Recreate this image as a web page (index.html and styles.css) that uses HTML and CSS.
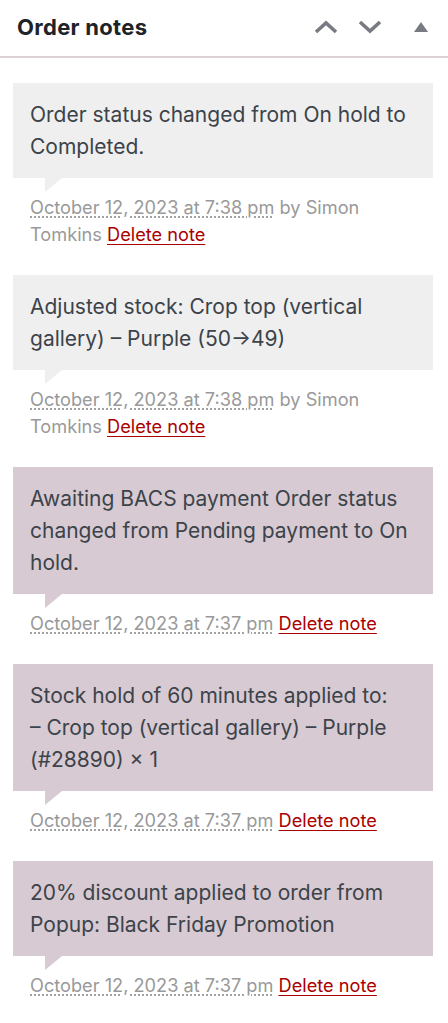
FILE: index.html
```html
<!DOCTYPE html>
<html lang="en">

<head>
    <meta charset="UTF-8">
    <meta name="viewport" content="width=device-width, initial-scale=1.0">
    <title>Order notes</title>
    <link rel="stylesheet" href="styles.css">
</head>
<body>
    <div class="postbox">
        <!-- Box header -->
        <div class="postbox-header">
            <h2>Order notes</h2>
            <div class="handle-actions">
                <button class="handle-order" title="Move up">
                    <svg width="24" height="14" viewBox="0 0 24 14"><polyline points="2,12 12,3 22,12" /></svg>
                </button>
                <button class="handle-order" title="Move down">
                    <svg width="24" height="14" viewBox="0 0 24 14"><polyline points="2,2 12,11 22,2" /></svg>
                </button>
                <button class="handle-toggle" title="Toggle panel">
                    <svg width="14" height="10" viewBox="0 0 14 10"><polygon points="7,0 14,10 0,10" /></svg>
                </button>
            </div>
        </div>

        <!-- Notes -->
        <ul class="order-notes">
            <li class="note">
                <div class="note-content">
                    <p>Order status changed from On hold to Completed.</p>
                </div>
                <p class="meta">
                    <abbr class="exact-date" title="2023-10-12 19:38:00">October 12, 2023 at 7:38 pm</abbr> by Simon Tomkins
                    <a href="#" class="delete-note">Delete note</a>
                </p>
            </li>
            <li class="note">
                <div class="note-content">
                    <p>Adjusted stock: Crop top (vertical gallery) – Purple (50→49)</p>
                </div>
                <p class="meta">
                    <abbr class="exact-date" title="2023-10-12 19:38:00">October 12, 2023 at 7:38 pm</abbr> by Simon Tomkins
                    <a href="#" class="delete-note">Delete note</a>
                </p>
            </li>
            <li class="note system-note">
                <div class="note-content">
                    <p>Awaiting BACS payment Order status changed from Pending payment to On hold.</p>
                </div>
                <p class="meta">
                    <abbr class="exact-date" title="2023-10-12 19:37:00">October 12, 2023 at 7:37 pm</abbr>
                    <a href="#" class="delete-note">Delete note</a>
                </p>
            </li>
            <li class="note system-note">
                <div class="note-content">
                    <p>Stock hold of 60 minutes applied to:<br>– Crop top (vertical gallery) – Purple (#28890) × 1</p>
                </div>
                <p class="meta">
                    <abbr class="exact-date" title="2023-10-12 19:37:00">October 12, 2023 at 7:37 pm</abbr>
                    <a href="#" class="delete-note">Delete note</a>
                </p>
            </li>
            <li class="note system-note">
                <div class="note-content">
                    <p>20% discount applied to order from Popup: Black Friday Promotion</p>
                </div>
                <p class="meta">
                    <abbr class="exact-date" title="2023-10-12 19:37:00">October 12, 2023 at 7:37 pm</abbr>
                    <a href="#" class="delete-note">Delete note</a>
                </p>
            </li>
        </ul>
    </div>
</body>

</html>
```

FILE: styles.css
```css
:root {
    --color-title: #1d2327;
    --color-text: #3c434a;
    --color-meta: #999999;
    --color-icon: #787c82;
    --color-note: #efefef;
    --color-system-note: #d7cad2;
    --color-delete: #a00;
    --color-divider: #dcd2d8;
}

* {
    margin: 0;
    padding: 0;
    box-sizing: border-box;
    font-family: Inter, "Noto Sans", sans-serif;
}

body {
    background-color: #ffffff;
    color: var(--color-text);
}

.postbox-header {
    display: flex;
    align-items: center;
    justify-content: space-between;
    height: 58px;
    padding: 0 20px 2px 17px;
    border-bottom: 2px solid var(--color-divider);
}

.postbox-header h2 {
    font-size: 22px;
    font-weight: 650;
    letter-spacing: 0.3px;
    color: var(--color-title);
}

.handle-actions {
    display: flex;
    align-items: center;
}

.handle-actions button {
    background: none;
    border: 0;
    cursor: pointer;
    display: flex;
    align-items: center;
    justify-content: center;
}

.handle-order {
    width: 44px;
    height: 30px;
}

.handle-order svg polyline {
    fill: none;
    stroke: var(--color-icon);
    stroke-width: 3.6;
}

.handle-toggle {
    width: 34px;
    height: 30px;
    margin-left: 2px;
    justify-content: flex-end !important;
}

.handle-toggle svg polygon {
    fill: var(--color-icon);
}

.order-notes {
    list-style: none;
    padding: 25px 15px 0 13px;
}

.note {
    margin-bottom: 27px;
}

.note-content {
    position: relative;
    background-color: var(--color-note);
    padding: 16px 17px 15px;
    font-size: 21px;
    line-height: 32px;
}

.note-content::after {
    content: "";
    position: absolute;
    left: 32px;
    bottom: -14px;
    width: 0;
    height: 0;
    border-style: solid;
    border-width: 14px 17px 0 0;
    border-color: var(--color-note) transparent;
}

.system-note .note-content {
    background-color: var(--color-system-note);
}

.system-note .note-content::after {
    border-color: var(--color-system-note) transparent;
}

.meta {
    padding: 16px 17px 0;
    font-size: 18.2px;
    line-height: 27px;
    color: var(--color-meta);
}

.exact-date {
    text-decoration: underline dotted;
    text-underline-offset: 3px;
}

.delete-note {
    color: var(--color-delete);
    text-decoration: underline;
    text-underline-offset: 3px;
}
```
